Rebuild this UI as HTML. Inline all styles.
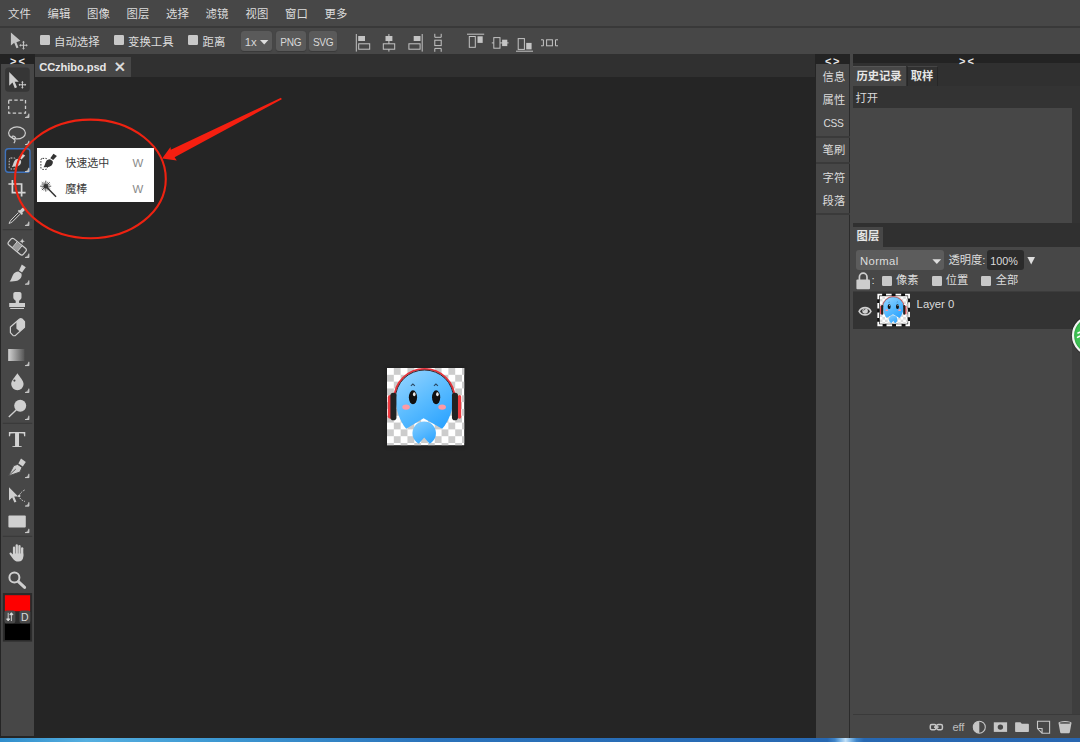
<!DOCTYPE html>
<html lang="zh-CN">
<head>
<meta charset="utf-8">
<title>CCzhibo.psd</title>
<style>
*{box-sizing:border-box;margin:0;padding:0}
html,body{width:1080px;height:742px;overflow:hidden;background:#252525}
body{font-family:"Liberation Sans","Noto Sans CJK SC",sans-serif;font-size:11.4px;color:#dcdcdc;position:relative}
.abs{position:absolute}
#menubar{left:0;top:0;width:1080px;height:27px;background:#474747;border-bottom:1px solid #393939}
#menubar span{position:absolute;top:0.6px;line-height:26px;white-space:nowrap}
#optbar{left:0;top:27px;width:1080px;height:27px;background:linear-gradient(#393939 0,#393939 0.9px,#474747 1px)}
#optbar .t{position:absolute;top:0.6px;line-height:28px;white-space:nowrap}
.cb{position:absolute;width:10px;height:10.4px;background:#c8c8c8;border-radius:1.2px}
.btn{position:absolute;top:4px;height:19.9px;overflow:hidden;box-shadow:0 0.6px 0.8px #3a3a3a;background:#5a5a5a;border-radius:3px;line-height:20px;text-align:center;color:#d8d8d8}
#tabrow{left:35px;top:54px;width:780px;height:23px;background:#303030}
#tab{left:35px;top:56.5px;width:96px;height:20.5px;background:#474747;font-weight:bold}
#canvas{left:35px;top:77px;width:780px;height:661px;background:#252525}
#tbhead{left:0;top:54px;width:35px;height:10px;background:#232323}
#toolbar{left:0.9px;top:63.6px;width:33.5px;height:672.4px;background:#474747}
#nhead{left:815px;top:54px;width:34.7px;height:10px;background:#232323}
#narrow{left:815.8px;top:63.6px;width:33.2px;height:674px;background:#474747}
#rgap{left:849.7px;top:54px;width:3.3px;height:683.5px;background:#474747}
#rline{left:848.9px;top:63.6px;width:1.3px;height:674px;background:#2b2b2b}
#rhead{left:852.5px;top:54px;width:227.5px;height:9.3px;background:#232323}
#rtabs1{left:852.5px;top:63.3px;width:227.5px;height:23px;background:#303030}
#hist{left:852.5px;top:86.1px;width:227.5px;height:136.9px;background:#333}
#histbody{left:852.5px;top:108.2px;width:219px;height:115px;background:#474747}
#rtabs2{left:852.5px;top:223px;width:227px;height:23.5px;background:#303030}
#layers{left:852.5px;top:246.5px;width:227px;height:467.5px;background:#474747}
#lfoot{left:852.5px;top:714px;width:227px;height:24px;background:#474747;border-top:1.5px solid #3a3a3a}
#bluebar{left:0;top:737.7px;width:1080px;height:4.3px;background:linear-gradient(90deg,#2f8dcb 0,#55afe0 8%,#3d98d2 20%,#2a72ba 40%,#2768b2 76.6%,#3f84c8 77.3%,#7db6e6 77.8%,#c4e1f8 78.3%,#7db6e6 78.8%,#3f84c8 79.3%,#2768b2 80%,#2866b0 100%)}

.t2{position:absolute;white-space:nowrap;line-height:14px;font-size:11.3px}
.b{font-weight:bold}
#popup{left:36.7px;top:148.4px;width:117.1px;height:53.6px;background:#fff}
#popuptxt{left:36.7px;top:148.4px;width:117.1px;height:53.6px;color:#333}
#popuptxt .t2{font-size:11px;color:#3a3a3a}
#popuptxt .k{color:#8a8a8a;font-size:11.4px}
.sep{position:absolute;left:816px;width:33.5px;height:1.6px;background:#3a3a3a}
</style>
</head>
<body>
<div id="menubar" class="abs">
<span style="left:8px">文件</span><span style="left:47.5px">编辑</span><span style="left:87px">图像</span><span style="left:126.5px">图层</span><span style="left:166px">选择</span><span style="left:205.5px">滤镜</span><span style="left:245.5px">视图</span><span style="left:285px">窗口</span><span style="left:324.5px">更多</span>
</div>
<div id="optbar" class="abs">
<div class="cb" style="left:39.6px;top:7.6px"></div><span class="t" style="left:54px">自动选择</span>
<div class="cb" style="left:114.4px;top:7.6px"></div><span class="t" style="left:128px">变换工具</span>
<div class="cb" style="left:188.2px;top:7.6px"></div><span class="t" style="left:202.5px">距离</span>
<div class="btn" style="left:240.5px;width:31.5px;text-align:left;padding-left:4.2px;line-height:22px">1x</div>
<div class="btn" style="left:276px;width:29.6px;font-size:10.1px;letter-spacing:-0.3px;line-height:23.5px">PNG</div>
<div class="btn" style="left:309.1px;width:28px;font-size:10.1px;letter-spacing:-0.3px;line-height:23.5px">SVG</div>
</div>
<div id="tbhead" class="abs"></div>
<div id="toolbar" class="abs"></div>
<div id="tabrow" class="abs"></div>
<div id="tab" class="abs"><span class="abs" style="left:4.2px;top:0.2px;line-height:20px;font-size:11.2px;letter-spacing:-0.12px;color:#e6e6e6">CCzhibo.psd</span></div>
<div id="canvas" class="abs"></div>
<div id="nhead" class="abs"></div>
<div id="narrow" class="abs"></div>
<div id="rgap" class="abs"></div>
<div id="rline" class="abs"></div>
<div id="rhead" class="abs"></div>
<div id="rtabs1" class="abs"></div>
<div id="hist" class="abs"></div>
<div id="histbody" class="abs"></div>
<div id="rtabs2" class="abs"></div>
<div id="layers" class="abs"></div>
<div id="lfoot" class="abs"></div>

<div class="abs" style="left:852.5px;top:66px;width:53.4px;height:20.3px;background:#474747;border-top:1px solid #555"></div>
<div class="abs" style="left:906.7px;top:66px;width:31.2px;height:19.8px;background:#313131;border-top:1px solid #454545;border-right:1px solid #272727;border-left:0.8px solid #272727"></div>
<div class="abs" style="left:853px;top:226.6px;width:30px;height:20px;background:#474747"></div>
<div class="abs" style="left:856.2px;top:250.3px;width:88.2px;height:20px;background:#5c5c5c;border-radius:3px"></div>
<div class="abs" style="left:987px;top:249.7px;width:36.8px;height:20.4px;background:#2b2b2b;border-radius:3px"></div>
<div class="abs" style="left:853px;top:291.2px;width:227px;height:37.4px;background:#333;border-top:1.2px solid #3c3c3c"></div>
<div class="abs" style="left:1071.5px;top:328.6px;width:8.5px;height:385.4px;background:#3e3e3e"></div>
<div id="popup" class="abs"></div>
<svg id="ov" class="abs" style="left:0;top:0" width="1080" height="742" viewBox="0 0 1080 742">
<defs>
<linearGradient id="gg" x1="0" x2="1" y1="0" y2="0"><stop offset="0" stop-color="#d2d2d2"/><stop offset="1" stop-color="#555"/></linearGradient>
<g id="brushsel">
<rect x="0.6" y="4.6" width="6.4" height="11" rx="1.6" fill="none" stroke="currentColor" stroke-width="1" stroke-dasharray="1.6 1.3"/>
<path d="M13.1 0 L16.6 2.2 L12.9 6.2 L10 4.4 Z" fill="currentColor"/>
<path d="M9.7 5.4 L12.3 7.2 C13.2 9.6 11.6 12 9.6 12.6 C7.6 13.3 5 13.2 3.2 13.5 C4.6 11.6 4.6 10.2 5.4 8.4 C6.2 6.6 7.8 5.4 9.7 5.4 Z" fill="currentColor"/>
</g>

<filter id="blur2" x="-20%" y="-20%" width="140%" height="140%"><feGaussianBlur stdDeviation="1.6"/></filter>
<radialGradient id="grn" cx="0.5" cy="0.5" r="0.5"><stop offset="0" stop-color="#45c95a"/><stop offset="0.85" stop-color="#3dc052"/><stop offset="1" stop-color="#2a9a3e"/></radialGradient>
<pattern id="chk" x="387" y="368" width="13.64" height="13.64" patternUnits="userSpaceOnUse"><rect x="6.82" y="0" width="6.82" height="6.82" fill="#ccc"/><rect x="0" y="6.82" width="6.82" height="6.82" fill="#ccc"/></pattern>
<pattern id="chk2" x="879.85" y="296.2" width="5.2" height="5.2" patternUnits="userSpaceOnUse"><rect x="2.6" y="0" width="2.6" height="2.6" fill="#dcdcdc"/><rect x="0" y="2.6" width="2.6" height="2.6" fill="#dcdcdc"/></pattern>
<linearGradient id="blu" x1="0.15" y1="0" x2="0.85" y2="1"><stop offset="0" stop-color="#93d3ff"/><stop offset="0.5" stop-color="#5bbcff"/><stop offset="1" stop-color="#2aa2ff"/></linearGradient>
<linearGradient id="blu2" x1="0.2" y1="0" x2="0.8" y2="1"><stop offset="0" stop-color="#7ecbff"/><stop offset="1" stop-color="#2fa5ff"/></linearGradient>
<g id="mascot">
<!-- 77x77 local coords -->
<path d="M7.3 30.6 A30.1 29.7 0 0 1 67.5 30.6" fill="none" stroke="#e8323c" stroke-width="1.9"/>
<rect x="0.8" y="27" width="5" height="23.6" rx="2.4" fill="#ee3a40"/>
<rect x="70.6" y="27" width="3.4" height="23.6" rx="1.7" fill="#ee3a40"/>
<path d="M37.4 1.9 A28.7 28.7 0 0 1 66.1 30.6 C66.1 42 61.5 53 55 60.7 L36.5 50.2 L19.2 60.7 C13 53 8.65 42 8.65 30.6 A28.7 28.7 0 0 1 37.4 1.9 Z" fill="url(#blu)"/>
<path d="M37.1 69.4 L42.5 75.5 A11.75 11.75 0 1 0 31.7 75.5 Z" fill="url(#blu2)"/>
<path d="M8.4 30.6 A29 28.6 0 0 1 66.4 30.6" fill="none" stroke="#2c1214" stroke-width="0.9"/>
<rect x="3.4" y="24.6" width="6" height="27.6" rx="2.8" fill="#222"/>
<rect x="64.8" y="24.6" width="6" height="27.6" rx="2.8" fill="#222"/>
<ellipse cx="25.9" cy="29.2" rx="4.1" ry="6.9" fill="#111"/>
<ellipse cx="49" cy="29.2" rx="4.1" ry="6.9" fill="#111"/>
<ellipse cx="27.2" cy="26.2" rx="1.3" ry="1.9" fill="#fff" opacity="0.9"/>
<ellipse cx="50.3" cy="26.2" rx="1.3" ry="1.9" fill="#fff" opacity="0.9"/>
<path d="M23.8 17.8 L25.8 16 L27.8 17.8" fill="none" stroke="#2b4a66" stroke-width="1.1"/>
<path d="M46.8 17.8 L48.8 16 L50.8 17.8" fill="none" stroke="#2b4a66" stroke-width="1.1"/>
<ellipse cx="19" cy="39" rx="3.8" ry="2.6" fill="#ff9aa4"/>
<ellipse cx="55" cy="39" rx="3.8" ry="2.6" fill="#ff9aa4"/>
</g>
<g id="tri"><path d="M4.2 0.2 V4.2 H0.2 Z" fill="#a2a2a2"/><path d="M3.8 0 V3.8 H0" fill="none" stroke="#d2d2d2" stroke-width="0.9"/></g>
</defs>
<!-- TOOLBAR -->
<g fill="#cfcfcf" stroke="none">
<rect x="5.1" y="67.5" width="24.6" height="24.3" rx="3.5" fill="#363636"/>
<path d="M9.2 72 V85.8 L12.5 82.6 L14.8 88.2 L17 87.3 L14.7 81.8 H18.8 Z"/>
<path d="M22.4 81.8 V87.8 M19.4 84.8 H25.4" stroke="#cfcfcf" stroke-width="1" fill="none"/>
<path d="M22.4 80.9 l1.3 1.5 h-2.6z M22.4 88.7 l1.3 -1.5 h-2.6z M18.5 84.8 l1.5 -1.3 v2.6z M26.3 84.8 l-1.5 -1.3 v2.6z"/>
<rect x="8.7" y="100.1" width="16.8" height="13" fill="none" stroke="#cfcfcf" stroke-width="1.3" stroke-dasharray="3.4 2.2"/>
<use href="#tri" x="25" y="113.6"/>
<ellipse cx="17" cy="132.9" rx="8.4" ry="6" fill="none" stroke="#cfcfcf" stroke-width="1.2"/>
<path d="M15.8 138.2 C14.6 135.6 11.8 135.4 12 137.2 C12.2 138.8 14.6 138.6 15 140.4 C15.2 141.6 14.4 142.4 13.8 143.2" fill="none" stroke="#cfcfcf" stroke-width="1.2"/>
<use href="#tri" x="25" y="140.8"/>
<rect x="5.4" y="148.7" width="24.6" height="23.6" rx="3" fill="#333" stroke="#3f73bd" stroke-width="1.4"/>
<use href="#brushsel" x="8.6" y="153.4" color="#cfcfcf"/>
<use href="#tri" x="25" y="167.8"/>
<path d="M12.4 180 V192.6 H25.6 M8.4 184 H21.6 V196.6" fill="none" stroke="#d6d6d6" stroke-width="1.7"/>
<g transform="translate(8.6 207.2)">
<path d="M11.2 3.2 L13.4 1 C14.2 0.2 15.4 0.2 16 1 C16.6 1.8 16.4 2.8 15.6 3.6 L13.6 5.6 L14.4 6.6 L13.2 7.8 L9.2 3.8 L10.4 2.6 Z"/>
<path d="M9.8 5.4 L2.2 13 C1.4 13.8 1 15.4 0.4 16.2 C1.4 15.8 3 15.4 3.8 14.6 L11.4 7" fill="none" stroke="#cfcfcf" stroke-width="1"/>
</g>
<use href="#tri" x="25" y="221.6"/>
<rect x="2.8" y="229" width="29.4" height="1.2" fill="#3a3a3a"/>
<!-- heal -->
<g transform="translate(17.2 246.7) rotate(39.5)">
<rect x="-9.6" y="-4" width="19.2" height="8" rx="2.2" fill="none" stroke="#cfcfcf" stroke-width="1.2"/>
<rect x="-3.2" y="-3.6" width="6.4" height="7.2" fill="#9a9a9a" stroke="none"/>
<path d="M-3.2 -4 V4 M3.2 -4 V4" stroke="#cfcfcf" stroke-width="0.9" fill="none"/>
</g>
<path d="M22.2 238.6 l0.8 1.8 l1.9 0.8 l-1.9 0.8 l-0.8 1.8 l-0.8 -1.8 l-1.9 -0.8 l1.9 -0.8z"/>
<use href="#tri" x="25" y="253.6"/>
<!-- brush -->
<g transform="translate(9.4 264.6)">
<path d="M12.4 0 L16.4 2.6 L12.6 8 L9.6 6 Z"/>
<path d="M9 7 L12 9 C13 12 11 14.8 8.6 15.8 C6 16.8 2.6 16.6 0.2 17 C2 14.8 2.4 12.6 3.4 10.6 C4.6 8.2 6.6 7 9 7 Z"/>
</g>
<use href="#tri" x="25" y="280.4"/>
<!-- stamp -->
<path d="M15.3 292 H19.5 C20.7 292 21.5 292.8 21.5 294 V297.4 C21.5 298.8 20.2 299.8 19.3 300.6 C18.9 301.4 19 302.2 19.2 303 H25 V307 H9.2 V303 H15.6 C15.8 302.2 15.9 301.4 15.5 300.6 C14.6 299.8 13.3 298.8 13.3 297.4 V294 C13.3 292.8 14.1 292 15.3 292 Z"/>
<rect x="10.2" y="307.9" width="13.8" height="1.1"/>
<!-- eraser -->
<path d="M10.4 327 L19.6 319 Q20.8 318.4 22 319 L24.5 321.6 V327.2 L15.2 335.6 Q14 336 13 335.4 L10.4 332.6 Z" fill="none" stroke="#cfcfcf" stroke-width="1.2" stroke-linejoin="round"/>
<path d="M16.4 321.8 L19.6 319 Q20.8 318.4 22 319 L24.5 321.6 V327.2 L19.8 331.4 L16.4 328.4 Z"/>
<!-- gradient -->
<rect x="8.2" y="349" width="16.2" height="12" fill="url(#gg)"/>
<use href="#tri" x="25" y="361.8"/>
<!-- blur drop -->
<path d="M17.4 373.2 C19.4 376.6 23.6 380.4 23.6 384 A6.2 6.2 0 0 1 11.2 384 C11.2 380.4 15.4 376.6 17.4 373.2 Z"/>
<circle cx="14.4" cy="380.6" r="1.1" fill="#474747"/>
<use href="#tri" x="25" y="388.6"/>
<!-- dodge -->
<circle cx="20.2" cy="405.8" r="6"/>
<path d="M16.4 409.8 L8.8 417" stroke="#cfcfcf" stroke-width="1.4" fill="none"/>
<use href="#tri" x="25" y="415.7"/>
<rect x="2.8" y="422.8" width="29.4" height="1.2" fill="#3a3a3a"/>
<!-- pen -->
<g transform="translate(8.4 458.6)">
<path d="M12.6 0 L17.4 3.4 L14.4 8 L10 5 Z"/>
<path d="M9.2 5.8 L13.6 8.8 L11.6 13.4 L0 17.4 L5.4 7 Z M0.6 16.8 L7.4 10.4" fill="#cfcfcf" stroke="#474747" stroke-width="0.9"/>
</g>
<use href="#tri" x="25" y="473.8"/>
<!-- path select -->
<path d="M9 487.2 V500.4 L12.2 497.4 L14.4 502.6 L16.4 501.8 L14.2 496.6 H18.2 Z"/>
<path d="M24.6 490 C21 492 19.4 494.4 19.2 496.2 C19.6 498.6 21.6 500.4 24.8 501.4" fill="none" stroke="#cfcfcf" stroke-width="1" stroke-dasharray="1.4 1.2"/>
<circle cx="19.2" cy="496" r="1.2"/>
<use href="#tri" x="25" y="502.2"/>
<!-- rect -->
<rect x="8.4" y="515.6" width="17.4" height="11.8" rx="1"/>
<use href="#tri" x="25" y="528.8"/>
<rect x="2.8" y="535.8" width="29.4" height="1.2" fill="#3a3a3a"/>
<!-- hand -->
<g>
<rect x="12.9" y="546.6" width="2.3" height="10" rx="1.15"/>
<rect x="15.6" y="544.3" width="2.3" height="12" rx="1.15"/>
<rect x="18.3" y="544.9" width="2.3" height="12" rx="1.15"/>
<rect x="21" y="547.2" width="2.3" height="10" rx="1.15"/>
<path d="M12.9 553.6 H23.3 V556.6 C23.3 559.6 21.4 561.6 18.4 561.6 C15.6 561.6 14.2 560.4 12.6 558.2 L9.7 554.3 C8.9 553.2 10.3 552 11.4 552.9 L12.9 554.6 Z"/>
</g>
<!-- zoom -->
<circle cx="14.4" cy="577.4" r="5" fill="none" stroke="#cfcfcf" stroke-width="2"/>
<path d="M18.4 581.6 L24.6 587.4" stroke="#cfcfcf" stroke-width="3" stroke-linecap="round" fill="none"/>
<!-- colors -->
<rect x="2.9" y="593" width="29.2" height="48.6" fill="#2b2b2b"/>
<rect x="4.9" y="595.2" width="25.2" height="16" fill="#fe0000"/>
<rect x="4.9" y="623.8" width="25.2" height="16.2" fill="#000"/>
<rect x="4.4" y="610.4" width="11" height="12.8" rx="2.2" fill="#4a4a4a"/>
<rect x="19.4" y="610.4" width="11" height="12.8" rx="2.2" fill="#4a4a4a"/>
<path d="M8.2 612.8 V620.6 M8.2 620.9 l-1.6 -2 h3.2z M11.4 613.2 V621 M11.4 612.7 l-1.6 2 h3.2z" stroke="#ddd" stroke-width="0.9" fill="#ddd"/>
</g>

<!-- OPTIONS BAR ICONS -->
<g fill="#c4c4c4" stroke="#c4c4c4" stroke-width="1">
<path d="M10.9 32.6 V45.6 L14.2 42.8 L16.5 48.2 L18.5 47.5 L16.4 42.2 L20.4 40.8 Z" stroke="none"/>
<path d="M23.5 41.8 V48.8 M20 45.3 H27" fill="none" stroke-width="1.1"/><path d="M23.5 40.8 l1.4 1.6 h-2.8z M23.5 49.8 l1.4 -1.6 h-2.8z M19.2 45.3 l1.6 -1.4 v2.8z M27.8 45.3 l-1.6 -1.4 v2.8z" stroke="none"/>
<path d="M356.3 34 V51.6" fill="none"/><rect x="358.2" y="36" width="6.8" height="5" stroke="none"/><rect x="358.7" y="43.8" width="11" height="5.4" fill="none"/>
<path d="M388.9 34 V51.6" fill="none"/><rect x="385.5" y="36" width="6.9" height="5" stroke="none"/><rect x="383.3" y="43.8" width="11.4" height="5.4" fill="#474747"/>
<path d="M422.2 34 V51.6" fill="none"/><rect x="413.7" y="36" width="6.8" height="5" stroke="none"/><rect x="408.9" y="43.8" width="11.2" height="5.4" fill="none"/>
<path d="M434.8 33.8 V37.3 H441.2 V33.8 M434.8 51.8 V48.4 H441.2 V51.8" fill="none"/><rect x="434.8" y="40.2" width="6.4" height="5.4" fill="none"/>
<path d="M467 34.2 H484.2" fill="none"/><rect x="469.3" y="36.5" width="6" height="10.8" fill="none"/><rect x="477.5" y="36.3" width="5.2" height="6.6" stroke="none"/>
<path d="M491.8 42.9 H508.6" fill="none"/><rect x="493.8" y="37.6" width="6.2" height="10.6" fill="#474747"/><rect x="502.1" y="39.7" width="5.2" height="6.4" stroke="none"/>
<path d="M516 51.2 H533" fill="none"/><rect x="518.2" y="38.6" width="6.2" height="10.8" fill="none"/><rect x="526.2" y="42.9" width="5.4" height="6.5" stroke="none"/>
<path d="M541 39.8 H543.4 V45.8 H541 M558 39.8 H555.5 V45.8 H558" fill="none"/><rect x="546.6" y="39.8" width="5.8" height="6" fill="none"/>
</g>
<path d="M260 40 H268.4 L264.2 44.4 Z" fill="#dedede"/>
<!-- RIGHT PANEL ICONS -->
<path d="M932.4 259.3 H941.2 L936.8 263.9 Z" fill="#dedede"/>
<path d="M1027.4 257 H1035 L1031.2 264.6 Z" fill="#dedede"/>
<g fill="#cdcdcd">
<path d="M859.4 280 V277 A3.8 3.8 0 0 1 867 277 V280" fill="none" stroke="#cdcdcd" stroke-width="1.7"/>
<rect x="856.4" y="279.6" width="13.6" height="9.6" rx="1"/>
<path d="M859.1 311.3 C861.8 306.4 868.4 306.4 870.9 311.3 C868.4 316.1 861.8 316.1 859.1 311.3 Z" fill="none" stroke="#d0d0d0" stroke-width="1.6"/>
<circle cx="865.1" cy="311" r="2.8" fill="#d0d0d0"/><path d="M863.6 310.6 A1.8 1.8 0 0 1 865.4 309" fill="none" stroke="#333" stroke-width="0.8"/>
</g>
<!-- layer thumb -->
<g>
<rect x="877.3" y="293.7" width="32.7" height="32.5" fill="#111"/>
<rect x="878.25" y="294.65" width="30.8" height="30.6" fill="none" stroke="#fff" stroke-width="1.8" stroke-dasharray="3.9 3.9 5.6 3.9 5.6 3.9 3.9 0 3.9 3.85 5.5 3.85 5.5 3.85 3.9 0"/>
<rect x="879.85" y="296.2" width="27.7" height="27.5" fill="#fff"/>
<rect x="879.85" y="296.2" width="27.7" height="27.5" fill="url(#chk2)"/>
<use href="#mascot" transform="translate(879.85 296.2) scale(0.3597 0.3571)"/>
</g>
<!-- footer icons -->
<g fill="#c6c6c6">
<rect x="930.3" y="724.5" width="5.6" height="5.2" rx="1.4" fill="none" stroke="#c6c6c6" stroke-width="1.5"/>
<rect x="936.8" y="724.5" width="5.6" height="5.2" rx="1.4" fill="none" stroke="#c6c6c6" stroke-width="1.5"/>
<rect x="934" y="726.3" width="4.6" height="1.6"/>
<circle cx="979.3" cy="727.2" r="6" fill="none" stroke="#c6c6c6" stroke-width="1.1"/>
<path d="M979.3 721.2 A6 6 0 0 0 979.3 733.2 Z"/>
<rect x="993.8" y="722.3" width="13.3" height="9.6"/><circle cx="1000.4" cy="727.1" r="2.7" fill="#474747"/>
<path d="M1015.1 723.2 C1015.1 722.6 1015.5 722.2 1016.1 722.2 H1020.4 L1021.8 723.8 H1027.9 C1028.5 723.8 1028.9 724.2 1028.9 724.8 V731 C1028.9 731.6 1028.5 732 1027.9 732 H1016.1 C1015.5 732 1015.1 731.6 1015.1 731 Z"/>
<path d="M1037.5 721.2 H1049.6 V733.2 H1042 L1037.5 728.6 Z M1037.6 728.5 H1042.1 V733.1" fill="none" stroke="#c6c6c6" stroke-width="1.1"/>
<path d="M1058.6 723.4 H1071.4 L1069.8 732.2 C1069.7 732.8 1069.2 733.2 1068.6 733.2 H1061.4 C1060.8 733.2 1060.3 732.8 1060.2 732.2 Z"/>
<ellipse cx="1065" cy="722.9" rx="6.6" ry="1.8" fill="#c6c6c6"/><ellipse cx="1065" cy="722.9" rx="5.2" ry="0.9" fill="#555"/>
</g>
<!-- green bubble -->
<circle cx="1092.4" cy="335.5" r="21.6" fill="#000" opacity="0.18"/>
<circle cx="1092.4" cy="335.5" r="19.4" fill="url(#grn)" stroke="#f4f4f4" stroke-width="2.2"/>
<path d="M1077.4 333.4 L1080 332 M1077 337.6 L1080 336" stroke="#fff" stroke-width="1.6" fill="none"/>
<!-- popup icons -->
<use href="#brushsel" x="40.3" y="153.8" color="#333"/>
<g stroke="#333" stroke-width="0.9" fill="none">
<path d="M45.8 180.7 V191.6 M40.2 186.2 H51.2 M41.8 182.3 L49.7 190.1 M49.7 182.3 L41.9 190.1" stroke-width="0.85"/>
<path d="M43.7 181.8 L47.9 190.6 M47.9 181.8 L43.7 190.6 M41.4 184.1 L50.2 188.3 M50.2 184.1 L41.4 188.3" stroke-width="0.55"/>
<path d="M47 187.6 L56 196.8" stroke-width="1.5"/>
</g>
<circle cx="45.8" cy="186.2" r="2.2" fill="#333"/>
<!-- annotations -->
<ellipse cx="90.4" cy="178.9" rx="75.4" ry="59.3" fill="none" stroke="#ee2211" stroke-width="2.1"/>
<path d="M281 97.8 L170.8 149.8 L170.5 146.9 L162.1 158.6 L176.8 160.5 L174.6 157.2 L281.8 99.2 Z" fill="#f51f10"/>
<!-- canvas image -->
<rect x="385" y="366.6" width="81" height="81.4" fill="#000" opacity="0.12" filter="url(#blur2)"/>
<rect x="387" y="368" width="77.2" height="77.2" fill="#fff"/>
<rect x="387" y="368" width="77.2" height="77.2" fill="url(#chk)"/>
<use href="#mascot" transform="translate(387 368) scale(1.0026)"/>
</svg>
<!-- toolbar / header text -->
<div class="t2 b" style="left:10px;top:54px;font-size:11px;letter-spacing:2.2px;color:#e8e8e8">&gt;&lt;</div>
<div class="t2 b" style="left:825px;top:54px;font-size:11px;letter-spacing:1.6px;color:#e8e8e8">&lt;&gt;</div>
<div class="t2 b" style="left:959px;top:54px;font-size:11px;letter-spacing:2.2px;color:#e8e8e8">&gt;&lt;</div>
<div class="t2" style="left:113.7px;top:59.6px;font-size:14.6px;color:#e2e2e2;-webkit-text-stroke:0.3px #e2e2e2;font-family:'DejaVu Sans',sans-serif">✕</div>
<div class="abs" style="left:7.3px;top:425.1px;font-family:'Liberation Serif',serif;font-weight:bold;font-size:24px;line-height:28px;color:#d2d2d2;width:20px;text-align:center;transform:scaleX(1.07)">T</div>
<div class="t2" style="left:21px;top:609.8px;font-size:10.5px;color:#ddd">D</div>
<!-- narrow panel -->
<div class="t2" style="left:822.6px;top:70.2px">信息</div>
<div class="t2" style="left:822.6px;top:93.3px">属性</div>
<div class="t2" style="left:823.6px;top:116.8px;font-size:10.2px;letter-spacing:-0.35px">CSS</div>
<div class="sep" style="top:136px"></div>
<div class="t2" style="left:822.6px;top:143.2px">笔刷</div>
<div class="sep" style="top:162.4px"></div>
<div class="t2" style="left:822.6px;top:170.6px">字符</div>
<div class="t2" style="left:822.6px;top:193.8px">段落</div>
<div class="sep" style="top:213.4px"></div>
<!-- history panel -->
<div class="t2 b" style="left:856.4px;top:69px;color:#e6e6e6">历史记录</div>
<div class="t2 b" style="left:910.8px;top:69px;color:#e6e6e6">取样</div>
<div class="t2" style="left:855.4px;top:91.3px">打开</div>
<!-- layers panel -->
<div class="t2 b" style="left:856.6px;top:229.4px;color:#e6e6e6">图层</div>
<div class="t2" style="left:860px;top:253.9px;letter-spacing:0.35px">Normal</div>
<div class="t2" style="left:948.4px;top:253.2px">透明度:</div>
<div class="t2" style="left:990.3px;top:254.1px;font-size:10.8px">100%</div>
<div class="t2" style="left:871.4px;top:273.4px">:</div>
<div class="cb" style="left:881.7px;top:275.7px"></div><div class="t2" style="left:896px;top:273.4px">像素</div>
<div class="cb" style="left:931.5px;top:275.7px"></div><div class="t2" style="left:945.8px;top:273.4px">位置</div>
<div class="cb" style="left:981.4px;top:275.7px"></div><div class="t2" style="left:995.8px;top:273.4px">全部</div>
<div class="t2" style="left:916.6px;top:297.4px">Layer 0</div>
<div class="t2" style="left:952.6px;top:720px;font-size:11.2px;color:#bdbdbd;letter-spacing:-0.2px">eff</div>
<!-- popup -->
<div id="popuptxt" class="abs">
<div class="t2" style="left:28.6px;top:7.2px">快速选中</div><div class="t2 k" style="left:95.8px;top:7.2px">W</div>
<div class="t2" style="left:28.6px;top:33.4px">魔棒</div><div class="t2 k" style="left:95.8px;top:33.4px">W</div>
</div>
<div id="bluebar" class="abs"></div>



</body>
</html>
